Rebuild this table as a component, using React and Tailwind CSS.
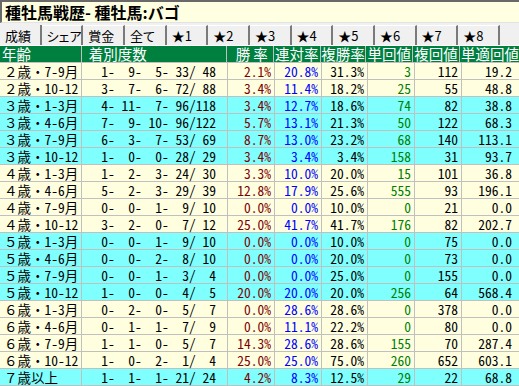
import React from "react";

const rows = [
  ["２歳・7-9月", [1, 9, 5, 33, 48], "2.1%", "20.8%", "31.3%", "3", "112", "19.2", false],
  ["２歳・10-12", [3, 7, 6, 72, 88], "3.4%", "11.4%", "18.2%", "25", "55", "48.8", false],
  ["３歳・1-3月", [4, 11, 7, 96, 118], "3.4%", "12.7%", "18.6%", "74", "82", "38.8", true],
  ["３歳・4-6月", [7, 9, 10, 96, 122], "5.7%", "13.1%", "21.3%", "50", "122", "68.3", true],
  ["３歳・7-9月", [6, 3, 7, 53, 69], "8.7%", "13.0%", "23.2%", "68", "140", "113.1", true],
  ["３歳・10-12", [1, 0, 0, 28, 29], "3.4%", "3.4%", "3.4%", "158", "31", "93.7", true],
  ["４歳・1-3月", [1, 2, 3, 24, 30], "3.3%", "10.0%", "20.0%", "15", "101", "36.8", false],
  ["４歳・4-6月", [5, 2, 3, 29, 39], "12.8%", "17.9%", "25.6%", "555", "93", "196.1", false],
  ["４歳・7-9月", [0, 0, 1, 9, 10], "0.0%", "0.0%", "10.0%", "0", "21", "0.0", false],
  ["４歳・10-12", [3, 2, 0, 7, 12], "25.0%", "41.7%", "41.7%", "176", "82", "202.7", false],
  ["５歳・1-3月", [0, 0, 1, 9, 10], "0.0%", "0.0%", "10.0%", "0", "75", "0.0", true],
  ["５歳・4-6月", [0, 0, 2, 8, 10], "0.0%", "0.0%", "20.0%", "0", "73", "0.0", true],
  ["５歳・7-9月", [0, 0, 1, 3, 4], "0.0%", "0.0%", "25.0%", "0", "155", "0.0", true],
  ["５歳・10-12", [1, 0, 0, 4, 5], "20.0%", "20.0%", "20.0%", "256", "64", "568.4", true],
  ["６歳・1-3月", [0, 2, 0, 5, 7], "0.0%", "28.6%", "28.6%", "0", "378", "0.0", false],
  ["６歳・4-6月", [0, 1, 1, 7, 9], "0.0%", "11.1%", "22.2%", "0", "80", "0.0", false],
  ["６歳・7-9月", [1, 1, 0, 5, 7], "14.3%", "28.6%", "28.6%", "155", "70", "287.4", false],
  ["６歳・10-12", [1, 0, 2, 1, 4], "25.0%", "25.0%", "75.0%", "260", "652", "603.1", false],
  ["７歳以上", [1, 1, 1, 21, 24], "4.2%", "8.3%", "12.5%", "29", "22", "68.8", true],
];

const pad = (n, w) => String(n).padStart(w, " ");
const fmt = ([a, b, c, d, e]) =>
  pad(a, 2) + "-" + pad(b, 3) + "-" + pad(c, 3) + "-" + pad(d, 3) + "/" + pad(e, 3);

const tabs = ["成績", "シェア", "賞金", "全て", "★1", "★2", "★3", "★4", "★5", "★6", "★7", "★8"];

export default function App() {
  return (
    <div className="w-[519px] h-[386px] overflow-hidden bg-[#f0f0f0] font-['Noto_Sans_CJK_JP',sans-serif]">
      {/* title */}
      <div className="h-[23px] bg-[#ffffe1] border-t-2 border-l-2 border-t-[#696969] border-l-[#696969] border-b border-b-[#e3e3e3] flex items-center pl-[3px] text-[16px] font-bold text-black leading-none whitespace-nowrap">
        種牡馬戦歴- 種牡馬:バゴ
      </div>
      {/* tabs */}
      <div className="h-[23px] flex items-end border-b border-b-white">
        {tabs.map((t, i) => (
          <div
            key={t}
            className={
              "w-[41.67px] shrink-0 h-[20px] flex items-center pl-[5px] text-[13px] leading-none text-black whitespace-nowrap overflow-hidden [font-feature-settings:'palt'] border-r-2 border-r-[#7a7a7a] " +
              (i === 0 ? "" : "border-t border-t-white")
            }
          >
            {t}
          </div>
        ))}
      </div>
      {/* table */}
      <div className="font-['Noto_Sans_Mono_CJK_JP','Noto_Sans_CJK_JP',monospace]">
        <div className="flex h-[17px] bg-[#00803f] text-white text-[14.5px] leading-[16px] border-b border-b-[#c0c0c0] whitespace-nowrap font-['Noto_Sans_CJK_JP',sans-serif]">
          <div className="w-[82px] pl-[2px] border-r border-r-[#c0c0c0]">年齢</div>
          <div className="w-[146px] pl-[7px] border-r border-r-[#c0c0c0]">着別度数</div>
          <div className="w-[47px] text-right pr-[2px] tracking-[3px] border-r border-r-[#c0c0c0]">勝率</div>
          <div className="w-[47px] text-center border-r border-r-[#c0c0c0]">連対率</div>
          <div className="w-[46px] text-center border-r border-r-[#c0c0c0]">複勝率</div>
          <div className="w-[47px] text-center border-r border-r-[#c0c0c0]">単回値</div>
          <div className="w-[47px] text-center border-r border-r-[#c0c0c0]">複回値</div>
          <div className="flex-1 pl-[1px]">単適回値</div>
        </div>
        {rows.map((r, i) => (
          <div
            key={i}
            className={
              "flex h-[17px] text-[13.5px] leading-[16px] border-b border-b-[#c0c0c0] whitespace-pre " +
              (r[8] ? "bg-[#80ffff]" : "bg-[#ffffe0]")
            }
          >
            <div className="w-[82px] pl-[4px] text-black border-r border-r-[#c0c0c0]">{r[0]}</div>
            <div className="w-[146px] text-right pr-[11px] text-black border-r border-r-[#c0c0c0]">{fmt(r[1])}</div>
            <div className="w-[47px] text-right pr-[3px] text-[#800000] border-r border-r-[#c0c0c0]">{r[2]}</div>
            <div className="w-[47px] text-right pr-[3px] text-[#0000ff] border-r border-r-[#c0c0c0]">{r[3]}</div>
            <div className="w-[46px] text-right pr-[3px] text-black border-r border-r-[#c0c0c0]">{r[4]}</div>
            <div className="w-[47px] text-right pr-[3px] text-[#008000] border-r border-r-[#c0c0c0]">{r[5]}</div>
            <div className="w-[47px] text-right pr-[3px] text-black border-r border-r-[#c0c0c0]">{r[6]}</div>
            <div className="flex-1 text-right pr-[7px] text-black">{r[7]}</div>
          </div>
        ))}
      </div>
    </div>
  );
}
